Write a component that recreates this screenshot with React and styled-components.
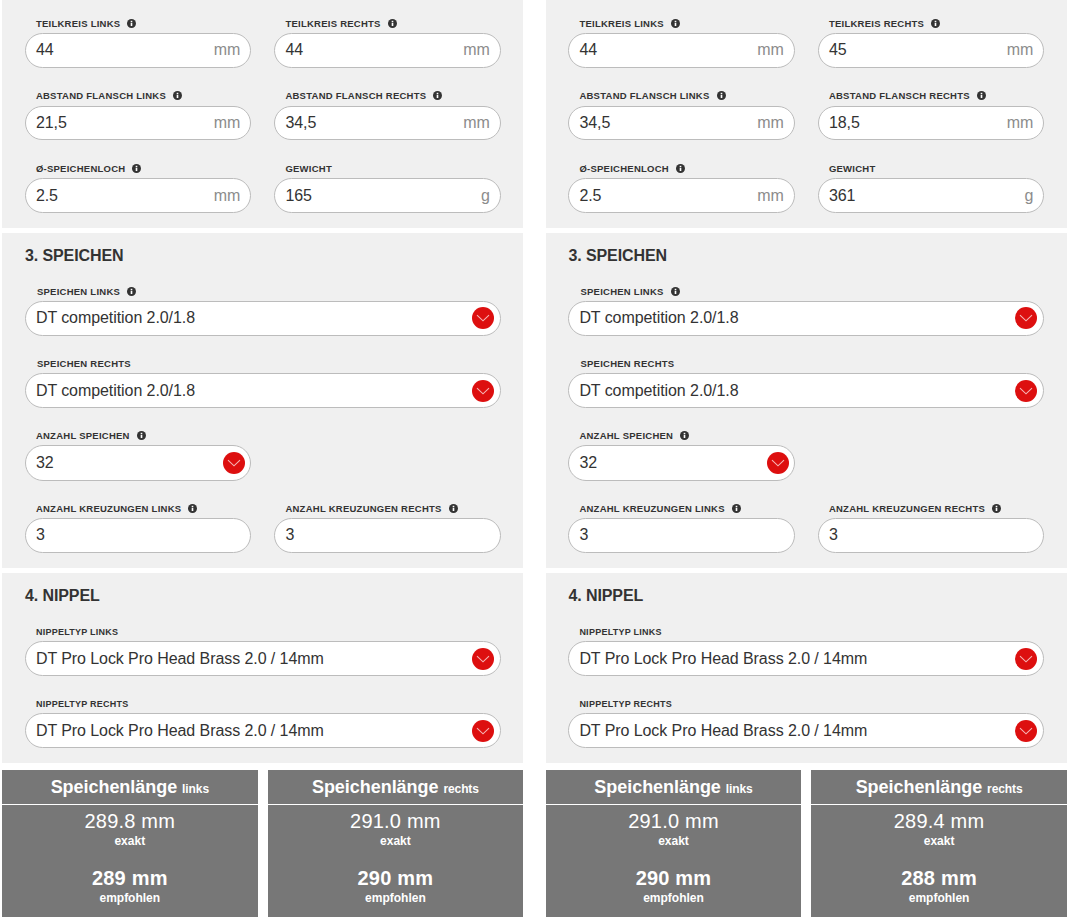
import React from 'react';
import styled, { createGlobalStyle } from 'styled-components';

const Global = createGlobalStyle`
  html, body {
    margin: 0;
    padding: 0;
    background: #fff;
    overflow: hidden;
  }
  body {
    font-family: "Liberation Sans", Arial, sans-serif;
    color: #333;
  }
`;

const Page = styled.div`
  display: grid;
  grid-template-columns: 521px 521px;
  column-gap: 22.7px;
  padding-left: 2px;
  width: 1068px;
  height: 917px;
  box-sizing: border-box;
  overflow: hidden;
`;

const Column = styled.div`
  display: flex;
  flex-direction: column;
  gap: 5px;
`;

const Panel = styled.section`
  background: #f0f0f0;
  height: ${p => p.$height}px;
  box-sizing: border-box;
  padding: ${p => p.$top}px 0 0 ${p => p.$left}px;
`;

const Heading = styled.h3`
  margin: 0 0 19px;
  font-size: 16px;
  line-height: 18px;
  font-weight: 700;
  letter-spacing: -0.08px;
  color: #333;
`;

const Rows = styled.div`
  display: grid;
  grid-template-columns: 226.5px 226.5px;
  column-gap: 23px;
  row-gap: ${p => p.$gap}px;
`;

const Field = styled.div`
  grid-column: ${p => (p.$wide ? '1 / -1' : 'auto')};
  min-width: 0;
`;

const Label = styled.label`
  display: flex;
  align-items: center;
  gap: 7px;
  height: 17px;
  box-sizing: border-box;
  padding: 0 0 2.4px ${p => (p.$inset ? 12 : 11)}px;
  font-size: ${p => (p.$small ? 9 : 9.5)}px;
  font-weight: 700;
  letter-spacing: 0.25px;
  text-transform: uppercase;
  color: #333;
  white-space: nowrap;
`;

const InfoDot = styled.svg`
  width: 9px;
  height: 9px;
  flex: none;
`;

const Box = styled.div`
  display: flex;
  align-items: center;
  justify-content: space-between;
  height: ${p => (p.$tall ? 36 : 34.7)}px;
  margin-bottom: ${p => (p.$tall ? -1 : 0)}px;
  box-sizing: border-box;
  padding: 0.1px 10px 0;
  background: #fff;
  border: 1px solid #bcbcbc;
  border-radius: 18px;
  font-size: 16px;
  letter-spacing: -0.07px;
  color: #333;
`;

const Unit = styled.span`
  color: #8c8c8c;
`;

const Arrow = styled.span`
  display: flex;
  align-items: center;
  justify-content: center;
  width: 22px;
  height: 22px;
  margin-right: ${p => (p.$short ? -5 : -4)}px;
  border-radius: 50%;
  background: #dd0f0f;
`;

const Results = styled.div`
  display: grid;
  grid-template-columns: 255.6px 255.6px;
  column-gap: 10px;
  margin-top: 2px;
`;

const Result = styled.div`
  background: #777;
  color: #fff;
  height: 147px;
  text-align: center;
`;

const ResultTitle = styled.div`
  height: 35px;
  box-sizing: border-box;
  padding-top: 7px;
  border-bottom: 1px solid #fff;
  font-size: 18px;
  line-height: 20px;
  font-weight: 700;
  letter-spacing: -0.04px;
  small {
    font-size: 12px;
    letter-spacing: -0.1px;
  }
`;

const Exact = styled.div`
  margin-top: 5px;
  font-size: 20px;
  line-height: 22px;
  letter-spacing: 0.2px;
`;

const Recommended = styled.div`
  margin-top: 19px;
  font-size: 20px;
  line-height: 22px;
  font-weight: 700;
  letter-spacing: 0.2px;
`;

const Caption = styled.div`
  margin-top: 2px;
  font-size: 12px;
  line-height: 14px;
  font-weight: 700;
`;

const Info = () => (
  <InfoDot viewBox="0 0 10 10">
    <circle cx="5" cy="5" r="5" fill="#333" />
    <rect x="4.1" y="4.2" width="1.8" height="3.6" fill="#fff" />
    <rect x="4.1" y="2" width="1.8" height="1.5" fill="#fff" />
  </InfoDot>
);

const Chevron = () => (
  <svg width="14" height="8" viewBox="0 0 14 8">
    <path d="M1 1.2 L7 6.8 L13 1.2" fill="none" stroke="#f6b5b5" strokeWidth="1.1" />
  </svg>
);

const InputField = ({ label, value, unit, info = true }) => (
  <Field>
    <Label>
      {label}
      {info && <Info />}
    </Label>
    <Box>
      <span>{value}</span>
      {unit && <Unit>{unit}</Unit>}
    </Box>
  </Field>
);

const SelectField = ({ label, value, wide = true, info = true, inset, small }) => (
  <Field $wide={wide}>
    <Label $inset={inset} $small={small}>
      {label}
      {info && <Info />}
    </Label>
    <Box $tall={!wide}>
      <span>{value}</span>
      <Arrow $short={!wide}>
        <Chevron />
      </Arrow>
    </Box>
  </Field>
);

const ResultCard = ({ side, exact, recommended }) => (
  <Result>
    <ResultTitle>
      Speichenlänge <small>{side}</small>
    </ResultTitle>
    <Exact>{exact} mm</Exact>
    <Caption>exakt</Caption>
    <Recommended>{recommended} mm</Recommended>
    <Caption>empfohlen</Caption>
  </Result>
);

const wheels = [
  {
    left: 22.9,
    hub: { circleL: '44', circleR: '44', flangeL: '21,5', flangeR: '34,5', hole: '2.5', weight: '165' },
    result: [
      ['289.8', '289'],
      ['291.0', '290'],
    ],
  },
  {
    left: 22.7,
    hub: { circleL: '44', circleR: '45', flangeL: '34,5', flangeR: '18,5', hole: '2.5', weight: '361' },
    result: [
      ['291.0', '290'],
      ['289.4', '288'],
    ],
  },
];

const spoke = 'DT competition 2.0/1.8';
const nipple = 'DT Pro Lock Pro Head Brass 2.0 / 14mm';

const Wheel = ({ left, hub, result }) => (
  <Column>
    <Panel $height={228} $top={16} $left={left}>
      <Rows $gap={20.9}>
        <InputField label="Teilkreis links" value={hub.circleL} unit="mm" />
        <InputField label="Teilkreis rechts" value={hub.circleR} unit="mm" />
        <InputField label="Abstand Flansch links" value={hub.flangeL} unit="mm" />
        <InputField label="Abstand Flansch rechts" value={hub.flangeR} unit="mm" />
        <InputField label="Ø-Speichenloch" value={hub.hole} unit="mm" />
        <InputField label="Gewicht" value={hub.weight} unit="g" info={false} />
      </Rows>
    </Panel>
    <Panel $height={335} $top={14} $left={left}>
      <Heading>3. SPEICHEN</Heading>
      <Rows $gap={20.5}>
        <SelectField label="Speichen links" value={spoke} inset />
        <SelectField label="Speichen rechts" value={spoke} inset info={false} />
        <SelectField label="Anzahl Speichen" value="32" wide={false} />
        <span />
        <InputField label="Anzahl Kreuzungen links" value="3" />
        <InputField label="Anzahl Kreuzungen rechts" value="3" />
      </Rows>
    </Panel>
    <Panel $height={190} $top={14.3} $left={left}>
      <Heading>4. NIPPEL</Heading>
      <Rows $gap={20.5}>
        <SelectField label="Nippeltyp links" value={nipple} small info={false} />
        <SelectField label="Nippeltyp rechts" value={nipple} small info={false} />
      </Rows>
    </Panel>
    <Results>
      <ResultCard side="links" exact={result[0][0]} recommended={result[0][1]} />
      <ResultCard side="rechts" exact={result[1][0]} recommended={result[1][1]} />
    </Results>
  </Column>
);

export default function App() {
  return (
    <>
      <Global />
      <Page>
        {wheels.map((wheel, i) => (
          <Wheel key={i} left={wheel.left} hub={wheel.hub} result={wheel.result} />
        ))}
      </Page>
    </>
  );
}
